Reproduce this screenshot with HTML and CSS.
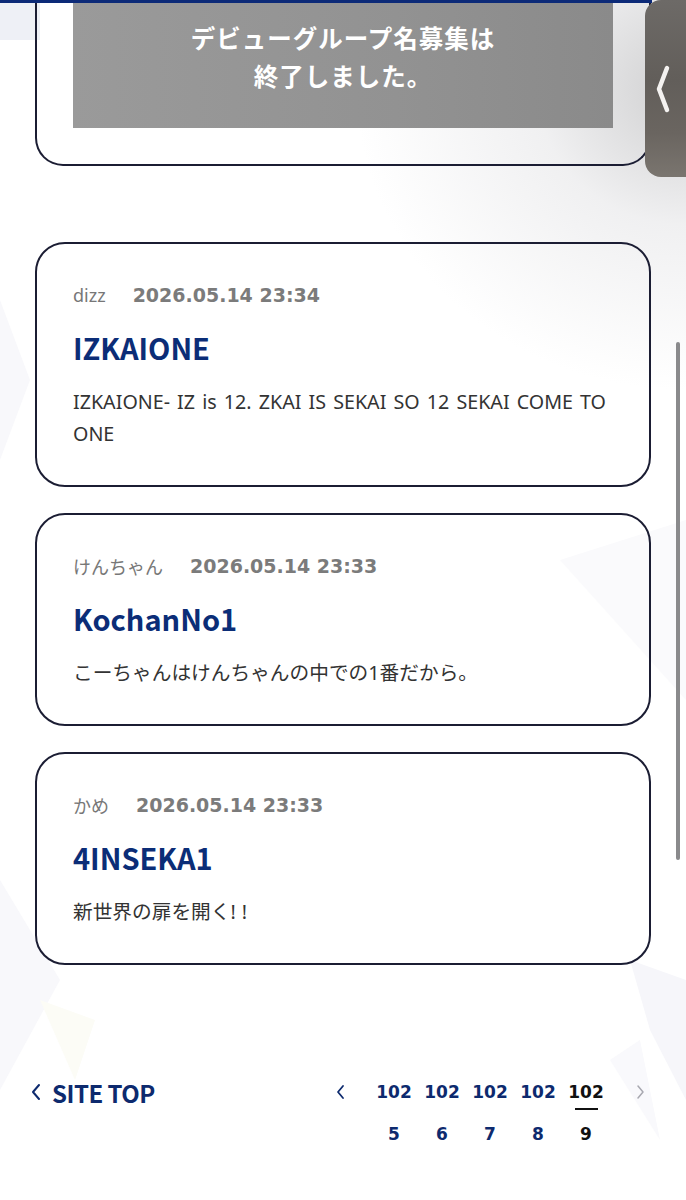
FILE: index.html
```html
<!DOCTYPE html>
<html lang="ja">
<head>
<meta charset="utf-8">
<title>デビューグループ名募集</title>
<link rel="stylesheet" href="styles.css">
</head>
<body>
<div class="page">
  <svg class="deco" width="686" height="1200" viewBox="0 0 686 1200" aria-hidden="true">
    <polygon points="0,0 40,0 40,40 0,40" fill="#eef0f6"/>
    <polygon points="0,300 30,380 0,460" fill="#f8f8fb"/>
    <polygon points="0,880 60,980 0,1090" fill="#f8f8fb"/>
    <polygon points="40,1000 95,1020 75,1080" fill="#fcfcf6"/>
    <polygon points="630,960 686,980 686,1100 650,1030" fill="#f6f6fa"/>
    <polygon points="610,1060 640,1040 660,1140" fill="#f9f9fc"/>
    <polygon points="560,560 686,520 686,700" fill="#fafafc"/>
  </svg>

  <div class="topbar"></div>

  <main class="content">
    <section class="closed-card">
      <div class="closed-box">デビューグループ名募集は<br>終了しました。</div>
    </section>

    <div class="list">
      <article class="card">
        <div class="meta"><span class="name">dizz</span><span class="date">2026.05.14 23:34</span></div>
        <h2 class="title">IZKAIONE</h2>
        <p class="body">IZKAIONE- IZ is 12. ZKAI IS SEKAI SO 12 SEKAI COME TO ONE</p>
      </article>
      <article class="card">
        <div class="meta"><span class="name">けんちゃん</span><span class="date">2026.05.14 23:33</span></div>
        <h2 class="title">KochanNo1</h2>
        <p class="body">こーちゃんはけんちゃんの中での1番だから。</p>
      </article>
      <article class="card">
        <div class="meta"><span class="name">かめ</span><span class="date">2026.05.14 23:33</span></div>
        <h2 class="title">4INSEKA1</h2>
        <p class="body">新世界の扉を開く<span class="bang">!!</span></p>
      </article>
    </div>

    <footer class="footer">
      <a class="site-top" href="#">
        <svg class="chev" width="12" height="18" viewBox="0 0 12 18"><polyline points="9,2 3,9 9,16" fill="none" stroke="#0d2a6e" stroke-width="2" stroke-linecap="round" stroke-linejoin="round"/></svg>
        <span>SITE TOP</span>
      </a>
      <nav class="pager">
        <span class="arrow prev">
          <svg width="12" height="18" viewBox="0 0 12 18"><polyline points="9,3 4,9 9,15" fill="none" stroke="#0d2a6e" stroke-width="1.8" stroke-linecap="round" stroke-linejoin="round"/></svg>
        </span>
        <a class="num" href="#">1025</a>
        <a class="num" href="#">1026</a>
        <a class="num" href="#">1027</a>
        <a class="num" href="#">1028</a>
        <span class="num current">1029</span>
        <span class="arrow next">
          <svg width="12" height="18" viewBox="0 0 12 18"><polyline points="3,3 8,9 3,15" fill="none" stroke="#a8a8b0" stroke-width="1.5" stroke-linecap="round" stroke-linejoin="round"/></svg>
        </span>
      </nav>
    </footer>
  </main>

  <div class="side-tab">
    <svg width="16" height="50" viewBox="0 0 16 50"><polyline points="12,4 4,25 12,46" fill="none" stroke="#f4f2f0" stroke-width="4.5" stroke-linecap="round" stroke-linejoin="round"/></svg>
  </div>
  <div class="scrollbar"></div>
</div>
</body>
</html>
```

FILE: styles.css
```css
* { box-sizing: border-box; }

html, body {
  margin: 0;
  padding: 0;
}

body {
  font-family: "Noto Sans CJK JP", "Noto Sans", sans-serif;
  color: #333;
  background: #fff;
}

.page {
  position: relative;
  width: 686px;
  min-height: 1200px;
  overflow: hidden;
  background:
    radial-gradient(ellipse 330px 300px at 686px 90px, #cfcfd0 0%, rgba(230,230,232,0.6) 45%, rgba(255,255,255,0) 100%),
    #fff;
}

.deco {
  position: absolute;
  left: 0;
  top: 0;
  z-index: 0;
}

.topbar {
  position: absolute;
  left: 0;
  top: 0;
  width: 652px;
  height: 3px;
  background: #0c2a78;
  z-index: 3;
}

.content {
  position: relative;
  z-index: 1;
  padding: 0 35px;
}

.closed-card {
  border: 2px solid #1b1d33;
  border-top: none;
  border-radius: 0 0 28px 28px;
  padding: 0 36px 36px;
}

.closed-box {
  height: 128px;
  background: linear-gradient(90deg, #9a9a9a 0%, #929292 60%, #8a8a8a 100%);
  color: #fff;
  font-weight: 700;
  font-size: 24.5px;
  letter-spacing: 1px;
  line-height: 38px;
  text-align: center;
  padding-top: 19px;
}

.list {
  margin-top: 76px;
  display: flex;
  flex-direction: column;
  gap: 26px;
}

.card {
  border: 2px solid #1b1d33;
  border-radius: 30px;
  padding: 36px 36px 35px;
}

.meta {
  display: flex;
  align-items: center;
  gap: 27px;
  height: 30px;
}

.name {
  font-family: "Noto Sans", "Noto Sans CJK JP", sans-serif;
  font-size: 18px;
  color: #777;
}

.date {
  font-family: "DejaVu Sans", "Noto Sans", sans-serif;
  font-weight: 700;
  font-size: 19px;
  color: #7b7b7b;
}

.title {
  margin: 17px 0 0;
  font-size: 29px;
  line-height: 40px;
  font-weight: 700;
  color: #0b2d77;
  letter-spacing: 0;
}

.body {
  margin: 19px 0 0;
  font-family: "Noto Sans", "Noto Sans CJK JP", sans-serif;
  font-size: 19.7px;
  line-height: 32px;
  word-spacing: 2px;
  color: #333;
}

.bang {
  letter-spacing: 6px;
}

.footer {
  margin: 106px 4px 0 -5px;
  display: flex;
  justify-content: space-between;
  align-items: flex-start;
}

.site-top {
  display: flex;
  align-items: center;
  gap: 10px;
  height: 42px;
  text-decoration: none;
  color: #0d2a6e;
  font-weight: 700;
  font-size: 24px;
  letter-spacing: -0.5px;
}

.pager {
  display: flex;
  align-items: flex-start;
  gap: 12px;
}

.arrow {
  height: 42px;
  display: flex;
  align-items: center;
}

.arrow.prev { margin-right: 18px; }
.arrow.next { margin-left: 19px; }

.num {
  position: relative;
  width: 36px;
  font-family: "DejaVu Sans", "Noto Sans", sans-serif;
  font-weight: 700;
  font-size: 17px;
  line-height: 42px;
  text-align: center;
  word-break: break-all;
  color: #0d2a6e;
  text-decoration: none;
}

.num.current { color: #111; }

.num.current::after {
  content: "";
  position: absolute;
  left: 7px;
  top: 37px;
  width: 23px;
  height: 2px;
  background: #111;
}

.side-tab {
  position: absolute;
  right: 0;
  top: 0;
  width: 41px;
  height: 177px;
  border-radius: 16px 0 0 16px;
  background: linear-gradient(180deg, #6d6a67 0%, #625e5a 45%, #6a6560 75%, #7a756f 100%);
  display: flex;
  align-items: center;
  justify-content: flex-start;
  padding-left: 10px;
  z-index: 4;
}

.scrollbar {
  position: absolute;
  left: 676px;
  top: 342px;
  width: 4px;
  height: 518px;
  border-radius: 2px;
  background: #8a8a8c;
  z-index: 4;
}
```
